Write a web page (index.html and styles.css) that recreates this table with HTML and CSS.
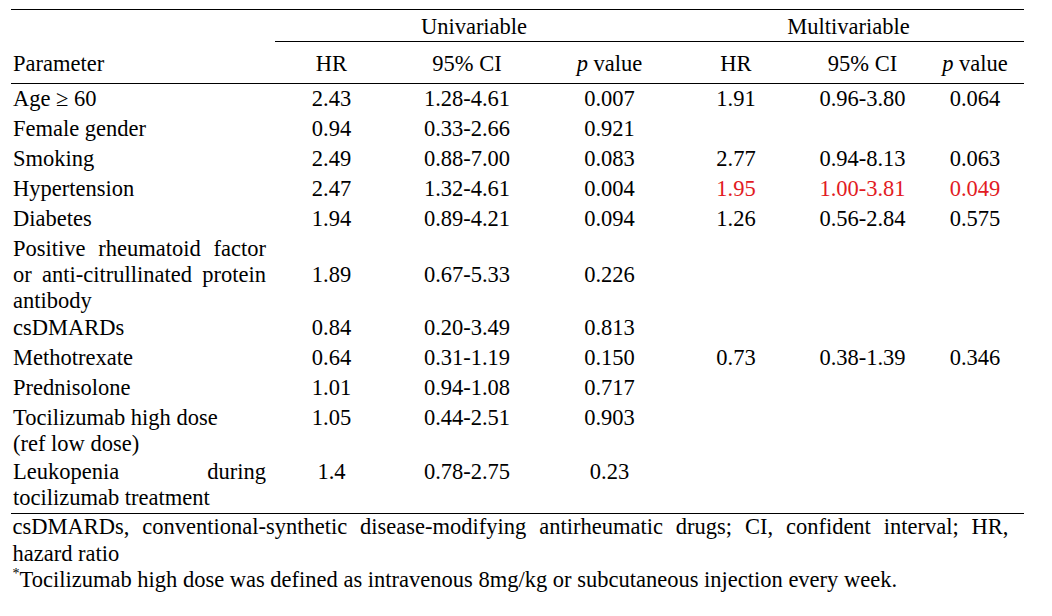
FILE: index.html
```html
<!DOCTYPE html>
<html lang="en">
<head>
<meta charset="utf-8">
<title>Hazard ratio table</title>
<link rel="stylesheet" href="styles.css">
</head>
<body>
<div class="page">
  <table class="tbl">
    <colgroup>
      <col class="c-param">
      <col class="c-hr1">
      <col class="c-ci1">
      <col class="c-p1">
      <col class="c-hr2">
      <col class="c-ci2">
      <col class="c-p2">
    </colgroup>
    <thead>
      <tr class="grp">
        <th class="blank"></th>
        <th class="group" colspan="3">Univariable</th>
        <th class="group" colspan="3">Multivariable</th>
      </tr>
      <tr class="cols">
        <th class="param">Parameter</th>
        <th>HR</th>
        <th>95% CI</th>
        <th><i>p</i> value</th>
        <th>HR</th>
        <th>95% CI</th>
        <th><i>p</i> value</th>
      </tr>
    </thead>
    <tbody>
      <tr>
        <td class="param">Age &ge; 60</td>
        <td>2.43</td><td>1.28-4.61</td><td>0.007</td>
        <td>1.91</td><td>0.96-3.80</td><td>0.064</td>
      </tr>
      <tr>
        <td class="param">Female gender</td>
        <td>0.94</td><td>0.33-2.66</td><td>0.921</td>
        <td></td><td></td><td></td>
      </tr>
      <tr>
        <td class="param">Smoking</td>
        <td>2.49</td><td>0.88-7.00</td><td>0.083</td>
        <td>2.77</td><td>0.94-8.13</td><td>0.063</td>
      </tr>
      <tr>
        <td class="param">Hypertension</td>
        <td>2.47</td><td>1.32-4.61</td><td>0.004</td>
        <td class="sig">1.95</td><td class="sig">1.00-3.81</td><td class="sig">0.049</td>
      </tr>
      <tr>
        <td class="param">Diabetes</td>
        <td>1.94</td><td>0.89-4.21</td><td>0.094</td>
        <td>1.26</td><td>0.56-2.84</td><td>0.575</td>
      </tr>
      <tr class="mid">
        <td class="param">Positive rheumatoid factor or anti-citrullinated protein antibody</td>
        <td>1.89</td><td>0.67-5.33</td><td>0.226</td>
        <td></td><td></td><td></td>
      </tr>
      <tr>
        <td class="param">csDMARDs</td>
        <td>0.84</td><td>0.20-3.49</td><td>0.813</td>
        <td></td><td></td><td></td>
      </tr>
      <tr>
        <td class="param">Methotrexate</td>
        <td>0.64</td><td>0.31-1.19</td><td>0.150</td>
        <td>0.73</td><td>0.38-1.39</td><td>0.346</td>
      </tr>
      <tr>
        <td class="param">Prednisolone</td>
        <td>1.01</td><td>0.94-1.08</td><td>0.717</td>
        <td></td><td></td><td></td>
      </tr>
      <tr>
        <td class="param">Tocilizumab high dose<br>(ref low dose)</td>
        <td>1.05</td><td>0.44-2.51</td><td>0.903</td>
        <td></td><td></td><td></td>
      </tr>
      <tr>
        <td class="param">Leukopenia during tocilizumab treatment</td>
        <td>1.4</td><td>0.78-2.75</td><td>0.23</td>
        <td></td><td></td><td></td>
      </tr>
    </tbody>
  </table>
  <p class="note">csDMARDs, conventional-synthetic disease-modifying antirheumatic drugs; CI, confident interval; HR, hazard ratio</p>
  <p class="note note-left"><sup class="star">*</sup>Tocilizumab high dose was defined as intravenous 8mg/kg or subcutaneous injection every week.</p>
</div>
</body>
</html>
```

FILE: styles.css
```css
html, body {
  margin: 0;
  padding: 0;
  background: #ffffff;
}

body {
  color: #000000;
  font-family: "Liberation Serif", "Times New Roman", serif;
  font-size: 22.5px;
}

.page {
  padding: 9px 0 0 11px;
}

.tbl {
  border-collapse: separate;
  border-spacing: 0;
  table-layout: fixed;
  width: 1013px;
}

.c-param { width: 264px; }
.c-hr1 { width: 113px; }
.c-ci1 { width: 158px; }
.c-p1 { width: 127px; }
.c-hr2 { width: 126px; }
.c-ci2 { width: 127px; }
.c-p2 { width: 98px; }

.tbl th,
.tbl td {
  padding: 0;
  font-weight: normal;
  line-height: 26px;
  text-align: center;
  vertical-align: top;
}

.grp th {
  border-top: 1px solid #000;
  padding: 4px 0 1px;
}

.grp th.group {
  border-bottom: 1px solid #000;
}

.cols th {
  border-bottom: 1px solid #000;
  padding: 8.5px 0 6.5px;
}

.cols th.param {
  text-align: left;
  padding-left: 2px;
}

.tbl tbody tr {
  height: 30px;
}

.tbl tbody td {
  padding: 1.5px 0 0;
}

.tbl tbody td.param {
  text-align: justify;
  padding-left: 2px;
  padding-right: 9px;
}

.tbl tbody tr.mid td {
  vertical-align: middle;
}

.tbl tbody tr.mid td.param {
  vertical-align: top;
}

.tbl tbody tr:last-child td {
  border-bottom: 1px solid #000;
  padding-bottom: 2.5px;
}

.sig {
  color: #e21b23;
}

.note {
  margin: 0;
  width: 996px;
  padding-left: 1.5px;
  line-height: 26.5px;
  text-align: justify;
}

.note-left {
  text-align: left;
}

.star {
  font-size: 14px;
  line-height: 0;
  vertical-align: 9px;
}
```
